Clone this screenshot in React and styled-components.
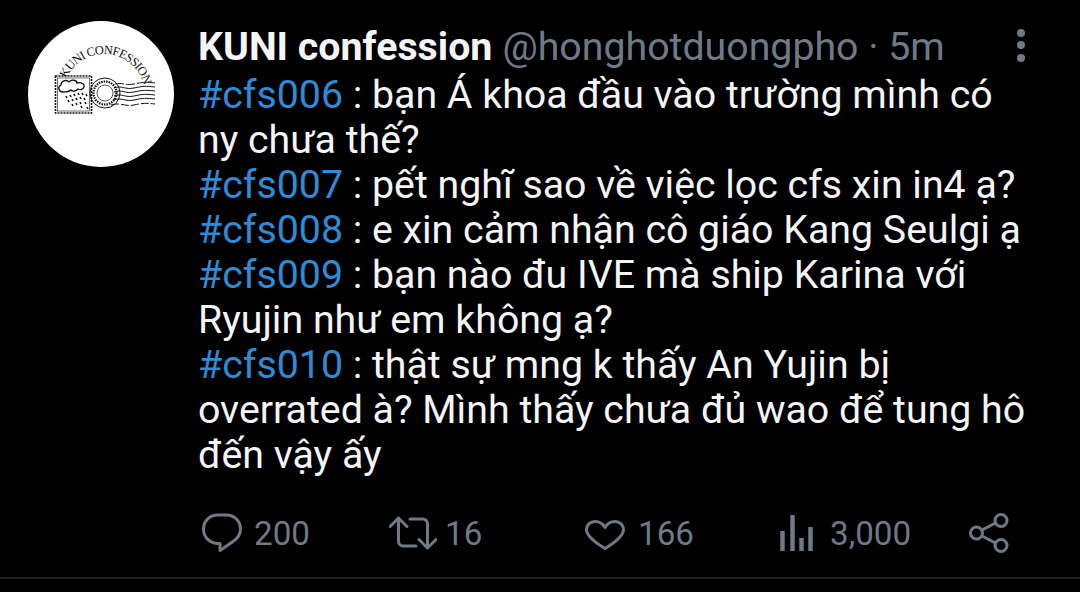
import React from "react";
import styled, { createGlobalStyle } from "styled-components";

const Global = createGlobalStyle`
  html, body { margin: 0; padding: 0; background: #000; }
  body { font-family: Roboto, "Noto Sans", sans-serif; }
`;

const Page = styled.div`
  width: 1080px;
  height: 592px;
  background: #000;
  display: flex;
  flex-direction: column;
  overflow: hidden;
`;
const Tweet = styled.article`
  display: flex;
  padding: 21px 0 0 28px;
  flex: 1;
  min-height: 0;
`;
const Avatar = styled.div`
  width: 146px;
  height: 146px;
  border-radius: 50%;
  background: #fff;
  flex: none;
  margin-right: 24px;
`;
const Body = styled.div`
  flex: 1;
  min-width: 0;
  display: flex;
  flex-direction: column;
`;
const Header = styled.header`
  display: flex;
  align-items: center;
  height: 50px;
  margin: 1px 0;
  font-size: 39.3px;
  white-space: nowrap;
`;
const Name = styled.span`
  font-weight: 700;
  color: #f4f5f5;
  margin-right: 10px;
`;
const Handle = styled.span`
  color: #6e7a86;
`;
const Kebab = styled.div`
  margin-left: auto;
  margin-right: 55px;
  display: flex;
  flex-direction: column;
  gap: 4.5px;
  margin-top: -4px;
`;
const Dot = styled.i`
  width: 8px;
  height: 8px;
  border-radius: 50%;
  background: #6e7a86;
`;
const Text = styled.div`
  width: 835px;
  font-size: 39.3px;
  line-height: 45px;
  color: #f4f5f5;
`;
const Para = styled.p`
  margin: 0;
`;
const Tag = styled.span`
  color: #2f8bd6;
`;
const Footer = styled.footer`
  display: grid;
  grid-template-columns: 187px 196px 195px 189px 60px;
  padding-left: 202px;
  height: 40px;
  margin-bottom: 25px;
`;
const Action = styled.div`
  display: flex;
  align-items: center;
  gap: ${(p) => p.$gap}px;
  color: #6e7a86;
  font-size: 33.2px;
`;
const Count = styled.span`
  padding-top: 2px;
`;
const Rule = styled.div`
  height: 2px;
  background: #202326;
  margin-bottom: 13px;
`;

const Logo = () => (
  <svg width="146" height="146" viewBox="0 0 146 146">
    <defs>
      <path id="arc" d="M35 74 A41 41 0 0 1 117 74" />
    </defs>
    <text fontFamily="Liberation Serif, serif" fontSize="12.5" letterSpacing="-0.7" fill="#111">
      <textPath href="#arc" startOffset="17">KUNI CONFESSION</textPath>
    </text>
    <rect x="27.5" y="55" width="36" height="37" fill="#fff" stroke="#111" strokeWidth="1.6" strokeDasharray="2 1" />
    <rect x="29.5" y="57" width="32" height="33" fill="none" stroke="#111" strokeWidth="0.6" />
    <path d="M35 71c-4 0-6-5-2-7 0-4 5-6 8-3 2-3 8-2 8 1 4-1 8 1 7 4-1 3-4 3-6 2-2 2-5 3-7 1-2 2-5 2-8 2z" fill="#fff" stroke="#111" strokeWidth="1.3" />
    <path d="M38 75l1 2M42 74l1 2M46 73l1 2M50 72l1 2M54 72l1 2M58 73l1 2M40 79l1 2M44 78l1 2M48 77l1 2M52 76l1 2M56 77l1 2M44 83l1 2M48 82l1 2M52 81l1 2M57 81l1 2M53 85l1 2M59 86l1 2" stroke="#111" strokeWidth="1.6" />
    <circle cx="77" cy="72" r="15" fill="none" stroke="#111" strokeWidth="1" />
    <circle cx="77" cy="72" r="8" fill="none" stroke="#111" strokeWidth="0.7" />
    <circle cx="77" cy="72" r="11.500" fill="none" stroke="#111" strokeWidth="2.2" strokeDasharray="1.5 1" />
    <g fill="none" stroke="#111" strokeWidth="1">
      <path d="M87 63c7-2 10 2 19 0s12-2 21-1" strokeDasharray="9 2" />
      <path d="M86 67c8-3 11 2 20 0s12-2 21-1" />
      <path d="M86 71c8-3 11 2 20 0s12-2 21-1" />
      <path d="M86 75c8-3 11 2 20 0s12-2 21-1" />
      <path d="M85 79c9-3 12 2 21 0s12-2 21-1" />
      <path d="M83 84c10-3 14 2 23 0s12-2 21-1" strokeDasharray="8 2" />
    </g>
  </svg>
);

const Icon = styled.svg`
  flex: none;
  fill: none;
  stroke: #6e7a86;
  stroke-width: 3;
  stroke-linejoin: round;
  stroke-linecap: round;
`;
const HeartIcon = styled(Icon)`
  margin-top: 4px;
`;
const BarsIcon = styled(Icon)`
  stroke-width: 4.5;
  stroke-linecap: butt;
`;

const Reply = () => (
  <Icon width="40" height="40" viewBox="0 0 40 40">
    <path d="M16 2h8c8.500 0 14.500 6 14.500 14 0 5.500-3 9.500-7.500 12.500l-13 9v-7h-2C8 30.500 1.500 24.500 1.500 16S8 2 16 2z" />
  </Icon>
);
const Retweet = () => (
  <Icon width="48" height="34" viewBox="0 0 48 34">
    <path d="M1 10.500 9.500 2 18 10.500M9.500 3v22c0 3 2 5 5 5H27M30 23.500l8.500 8.500 8.500-8.500M38.500 31V8c0-3-2-5-5-5H21" />
  </Icon>
);
const Heart = () => (
  <HeartIcon width="40" height="30" viewBox="0 0 40 30">
    <path d="M20 28.500C10 22.500 1.500 16 1.500 9.500 1.500 5 5 1.500 10 1.500c4.500 0 8 2.500 10 6 2-3.500 5.500-6 10-6 5 0 8.500 3.500 8.500 8 0 6.500-8.500 13-18.500 19z" />
  </HeartIcon>
);
const Bars = () => (
  <BarsIcon width="33" height="36" viewBox="0 0 33 36">
    <path d="M2.500 36V16M12.500 36V0M21.500 36V23M30.500 36V12" />
  </BarsIcon>
);
const Share = () => (
  <Icon width="40" height="40" viewBox="0 0 40 40">
    <circle cx="7.500" cy="20" r="6" />
    <circle cx="32" cy="7.500" r="6" />
    <circle cx="32" cy="32.500" r="6" />
    <path d="M13 17l13.500-7M13 23l13.500 7" />
  </Icon>
);

const rows = [
  ["#cfs006", " : bạn Á khoa đầu vào trường mình có ny chưa thế?"],
  ["#cfs007", " : pết nghĩ sao về việc lọc cfs xin in4 ạ?"],
  ["#cfs008", " : e xin cảm nhận cô giáo Kang Seulgi ạ"],
  ["#cfs009", " : bạn nào đu IVE mà ship Karina với Ryujin như em không ạ?"],
  ["#cfs010", " : thật sự mng k thấy An Yujin bị overrated à? Mình thấy chưa đủ wao để tung hô đến vậy ấy"],
];

export default function App() {
  return (
    <Page>
      <Global />
      <Tweet>
        <Avatar><Logo /></Avatar>
        <Body>
          <Header>
            <Name>KUNI confession</Name>
            <Handle>@honghotduongpho · 5m</Handle>
            <Kebab><Dot /><Dot /><Dot /></Kebab>
          </Header>
          <Text>
            {rows.map(([tag, rest]) => (
              <Para key={tag}><Tag>{tag}</Tag>{rest}</Para>
            ))}
          </Text>
        </Body>
      </Tweet>
      <Footer>
        <Action $gap={12}><Reply /><Count>200</Count></Action>
        <Action $gap={8}><Retweet /><Count>16</Count></Action>
        <Action $gap={13}><Heart /><Count>166</Count></Action>
        <Action $gap={17}><Bars /><Count>3,000</Count></Action>
        <Action $gap={0}><Share /></Action>
      </Footer>
      <Rule />
    </Page>
  );
}
